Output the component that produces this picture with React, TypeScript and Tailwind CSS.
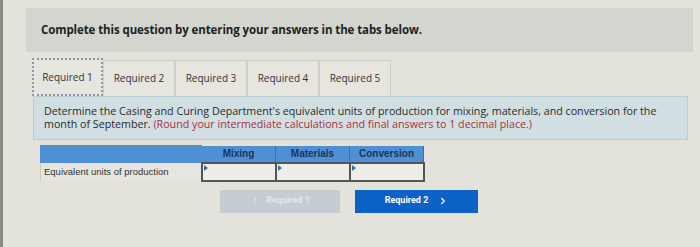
// Homework question panel - tabbed "Required" parts with an answer table

import { ChevronLeft, ChevronRight } from "lucide-react"

const tabs = ["Required 1", "Required 2", "Required 3", "Required 4", "Required 5"]
const columns = ["Mixing", "Materials", "Conversion"]

export default function App() {
  return (
    <div className="w-[700px] h-[247px] overflow-hidden bg-[#e3e2db] border-l-[3px] border-[#8a8a86] pt-[8px] pr-[7px] font-['Open_Sans',sans-serif]">
      <div className="ml-[23px] h-[44px] bg-[#d5d5cf] flex items-center pl-[15px]">
        <p className="text-[11.5px] font-bold text-[#1e1e1e] tracking-[-0.1px]">
          Complete this question by entering your answers in the tabs below.
        </p>
      </div>

      <div className="ml-[29px] mt-[6px] flex items-end">
        {tabs.map((tab, i) => (
          <div
            key={tab}
            className={
              i === 0
                ? "w-[71px] h-[38px] border-2 border-dotted border-[#8e96a8] flex items-center justify-center text-[10px] text-[#333] bg-[#e6e5de]"
                : "w-[72px] h-[36px] border border-[#cfcfc8] border-b-0 flex items-center justify-center text-[10px] text-[#333] bg-[#e6e5de]"
            }
          >
            {tab}
          </div>
        ))}
      </div>

      <div className="ml-[30px] mr-[5px] h-[44px] bg-[#d2dfe2] border border-[#bccdd3] pl-[10px] pr-[24px] pt-[8px] text-[10.7px] leading-[13px] text-[#2a2a2a]">
        <p>
          Determine the Casing and Curing Department's equivalent units of production for mixing, materials, and conversion for the month of September.{" "}
          <span className="text-[#a5313e]">
            (Round your intermediate calculations and final answers to 1 decimal place.)
          </span>
        </p>
      </div>

      <table className="ml-[37px] mt-[5px] border-collapse font-['Liberation_Sans',sans-serif]">
        <thead>
          <tr className="bg-[#4f8fd4] h-[17px]">
            <th className="w-[161px] border border-[#4f8fd4]"></th>
            {columns.map((c) => (
              <th
                key={c}
                className="w-[74px] border-x border-[#3e6fa8] text-[10px] font-bold text-[#18335f] text-center"
              >
                {c}
              </th>
            ))}
          </tr>
        </thead>
        <tbody>
          <tr className="h-[18px]">
            <td className="border-l border-[#c9c9c2] bg-[#e6e5df] pl-[3px] text-[9.5px] text-[#333]">
              Equivalent units of production
            </td>
            {columns.map((c) => (
              <td key={c} className="relative border-2 border-[#555] bg-[#eeeee9]">
                <span className="absolute left-[1px] top-[1px] w-0 h-0 border-t-[3px] border-b-[3px] border-l-[4px] border-t-transparent border-b-transparent border-l-[#3e6fa8]" />
              </td>
            ))}
          </tr>
        </tbody>
      </table>

      <div className="mt-[8px] ml-[217px] flex gap-[15px] font-['Roboto',sans-serif]">
        <div className="w-[120px] h-[23px] bg-[#c5ccd3] flex items-center justify-center gap-[6px] text-[9px] font-bold text-[#e2e7ec]">
          <ChevronLeft size={10} strokeWidth={2.5} />
          Required 1
        </div>
        <div className="w-[123px] h-[23px] bg-[#0d62c7] flex items-center justify-center gap-[10px] text-[9px] font-bold text-white">
          Required 2
          <ChevronRight size={10} strokeWidth={3} />
        </div>
      </div>
    </div>
  )
}
